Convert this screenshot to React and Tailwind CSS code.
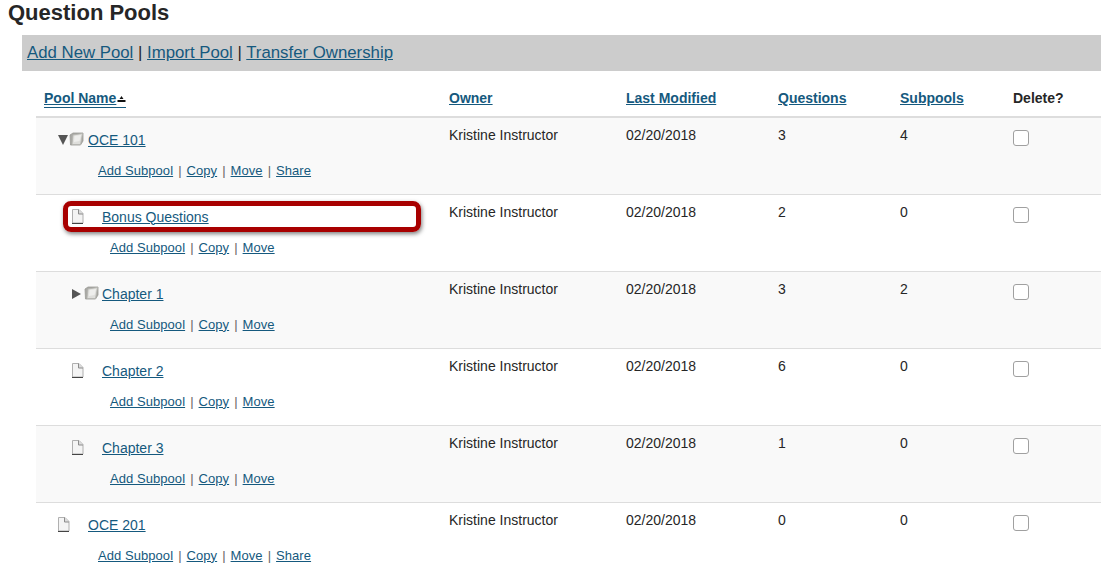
import React from 'react';

const pools = [
  { name: 'OCE 101', level: 0, kind: 'open', questions: 3, subpools: 4, actions: ['Add Subpool', 'Copy', 'Move', 'Share'] },
  { name: 'Bonus Questions', level: 1, kind: 'file', questions: 2, subpools: 0, actions: ['Add Subpool', 'Copy', 'Move'] },
  { name: 'Chapter 1', level: 1, kind: 'closed', questions: 3, subpools: 2, actions: ['Add Subpool', 'Copy', 'Move'] },
  { name: 'Chapter 2', level: 1, kind: 'file', questions: 6, subpools: 0, actions: ['Add Subpool', 'Copy', 'Move'] },
  { name: 'Chapter 3', level: 1, kind: 'file', questions: 1, subpools: 0, actions: ['Add Subpool', 'Copy', 'Move'] },
  { name: 'OCE 201', level: 0, kind: 'file', questions: 0, subpools: 0, actions: ['Add Subpool', 'Copy', 'Move', 'Share'] },
];

function FolderIcon() {
  return (
    <svg width="15" height="14" viewBox="0 0 15 14" className="shrink-0">
      <path d="M1 3 L4 1 L14 1 L14 9 L11.5 13 L1.5 13 Z" fill="#a9a9a5" stroke="#9a9a96" strokeWidth="0.8" />
      <path d="M4 3 L13.5 1.5 L11.5 12.5 L3 12.5 Z" fill="#dededb" stroke="#b5b5b0" strokeWidth="0.8" />
      <path d="M5.5 4 L12 3 L10.5 9 L5 10 Z" fill="#eeeeec" />
    </svg>
  );
}

function FileIcon() {
  return (
    <svg width="13" height="15" viewBox="0 0 13 15" className="shrink-0 -ml-px">
      <path d="M1.5 0.5 H8 L12 4.5 V14 H1.5 Z" fill="#f4f4f4" stroke="#b0b0b0" />
      <path d="M7.5 0.5 V5 H12" fill="#dcdcdc" stroke="#8c8c8c" />
      <path d="M1 14.5 H12" stroke="#444" />
    </svg>
  );
}

function PoolIcon({ kind }) {
  if (kind === 'file') {
    return <FileIcon />;
  }
  return (
    <>
      {kind === 'open' ? (
        <span className="w-0 h-0 border-x-[5.5px] border-x-transparent border-t-[10px] border-t-[#555]" />
      ) : (
        <span className="w-0 h-0 border-y-[5px] border-y-transparent border-l-[9px] border-l-[#555]" />
      )}
      <span className={kind === 'open' ? 'ml-[1px] mt-[-2px]' : 'ml-[3px] mt-[-2px]'}>
        <FolderIcon />
      </span>
    </>
  );
}

function PoolRow({ pool, index }) {
  const cell = 'align-top px-2 pt-[7px]';
  return (
    <tr className={`h-[77px] border-b border-[#ddd] ${index % 2 === 0 ? 'bg-[#f9f9f9]' : 'bg-white'}`}>
      <td className="align-top pt-[12px]">
        <div className={`flex items-center h-5 ${pool.level === 0 ? 'pl-[22px]' : 'pl-[36px]'}`}>
          <div className="w-[30px] flex items-center">
            <PoolIcon kind={pool.kind} />
          </div>
          <a href="#" className="text-[#15597e] underline">{pool.name}</a>
        </div>
        <div className={`mt-[11px] text-[13px] leading-5 tracking-[0.06px] text-[#666] ${pool.level === 0 ? 'pl-[62px]' : 'pl-[74px]'}`}>
          {pool.actions.map((action, i) => (
            <span key={action}>
              {i > 0 && <span className="mx-[5px]">|</span>}
              <a href="#" className="text-[#15597e] underline">{action}</a>
            </span>
          ))}
        </div>
      </td>
      <td className={cell}>Kristine Instructor</td>
      <td className={cell}>02/20/2018</td>
      <td className={cell}>{pool.questions}</td>
      <td className={cell}>{pool.subpools}</td>
      <td className="align-top px-2 pt-[12px]">
        <span className="block w-4 h-4 rounded-[3px] border border-[#a0a0a0] bg-white" />
      </td>
    </tr>
  );
}

export default function App() {
  const link = 'text-[#15597e] underline';
  return (
    <div className="relative h-[570px] w-[1119px] overflow-hidden bg-white text-[14px] leading-5 text-[#262626] font-['Liberation_Sans',Arial,sans-serif]">
      <h1 className="pl-2 text-[22px] leading-[25px] font-bold">Question Pools</h1>
      <div className="mt-[10px] ml-[22px] w-[1079px] h-[36px] pl-[5px] bg-[#ccc] text-[16.8px] leading-[36px]">
        <a href="#" className={link}>Add New Pool</a> | <a href="#" className={link}>Import Pool</a> | <a href="#" className={link}>Transfer Ownership</a>
      </div>

      <table className="ml-[36px] mt-[10px] w-[1065px] table-fixed border-collapse">
        <colgroup>
          <col className="w-[405px]" />
          <col className="w-[177px]" />
          <col className="w-[152px]" />
          <col className="w-[122px]" />
          <col className="w-[113px]" />
          <col className="w-[96px]" />
        </colgroup>
        <thead>
          <tr className="h-[36px] border-b-2 border-[#ddd] text-left">
            <th className="px-2 pb-[2px] font-bold">
              <a href="#" className={`${link} inline-flex items-center border-b border-[#15597e] no-underline leading-[17px]`}>
                Pool Name
                <svg width="9" height="14" viewBox="0 0 9 14" className="ml-px">
                  <path d="M4.5 5 L6.5 8 H2.5 Z M0.5 9 H8.5 V11 H0.5 Z" fill="#111" />
                </svg>
              </a>
            </th>
            <th className="px-2 pb-[2px] font-bold"><a href="#" className={link}>Owner</a></th>
            <th className="px-2 pb-[2px] font-bold"><a href="#" className={link}>Last Modified</a></th>
            <th className="px-2 pb-[2px] font-bold"><a href="#" className={link}>Questions</a></th>
            <th className="px-2 pb-[2px] font-bold"><a href="#" className={link}>Subpools</a></th>
            <th className="px-2 pb-[2px] font-bold">Delete?</th>
          </tr>
        </thead>
        <tbody>
          {pools.map((pool, i) => (
            <PoolRow key={pool.name} pool={pool} index={i} />
          ))}
        </tbody>
      </table>

      {/* red callout round the Bonus Questions row */}
      <div className="absolute left-[63px] top-[201px] w-[358px] h-[31px] rounded-[8px] border-[5px] border-[#a80000] shadow-[1px_2px_4px_rgba(0,0,0,0.5)]" />
    </div>
  );
}
